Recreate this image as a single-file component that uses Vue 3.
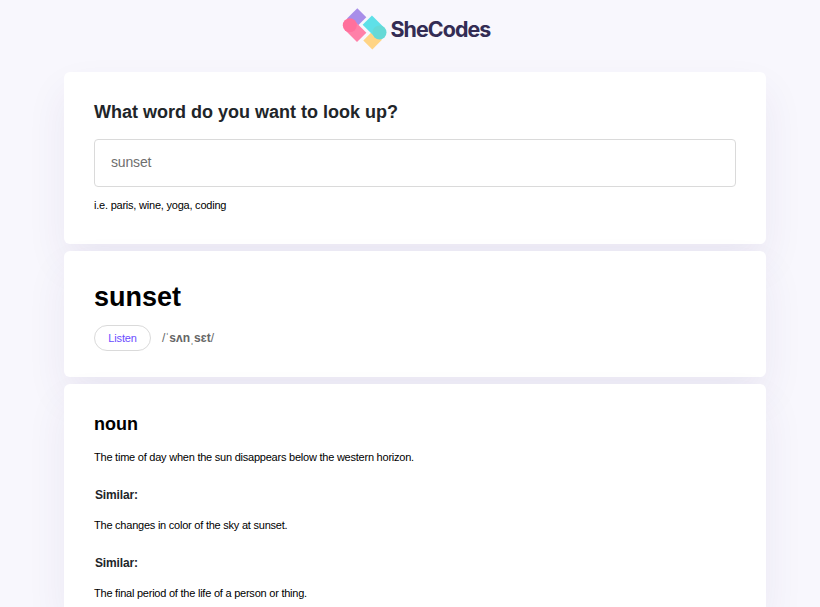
<script setup>
const meanings = [
  { text: 'The time of day when the sun disappears below the western horizon.', similar: true },
  { text: 'The changes in color of the sky at sunset.', similar: true },
  { text: 'The final period of the life of a person or thing.', similar: false },
]
</script>

<template>
  <main class="page">
    <header class="header">
      <svg class="logo" width="152" height="44" viewBox="0 0 152 44" role="img" aria-label="SheCodes">
        <path d="M15.3 0.3 L24.3 9.3 L14 19.6 L5 10.6 Z" fill="#a88ee9" />
        <path d="M30.3 41.4 L21.3 32.4 L31 22.7 L40 31.7 Z" fill="#ffd485" />
        <path d="M7.9 17.6 L19.7 29.4" stroke="#ff80a8" stroke-width="13.2" />
        <circle cx="7.8" cy="17.3" r="7" fill="#ff709c" />
        <path d="M25.3 12.1 L37.6 24.4" stroke="#5fe0e8" stroke-width="13.2" />
        <circle cx="37.5" cy="24.5" r="7" fill="#66d9d6" />
        <text x="48.4" y="29.2" textLength="100" lengthAdjust="spacingAndGlyphs">SheCodes</text>
      </svg>
    </header>

    <section class="card search">
      <h1>What word do you want to look up?</h1>
      <input type="search" placeholder="sunset" />
      <p class="hint">i.e. paris, wine, yoga, coding</p>
    </section>

    <section class="card result">
      <h2>sunset</h2>
      <div class="phonetic">
        <button type="button">Listen</button>
        <span>/ˈ<b>sʌn</b>ˌ<b>sɛt</b>/</span>
      </div>
    </section>

    <section class="card meaning">
      <h3>noun</h3>
      <div v-for="item in meanings" :key="item.text" class="definition">
        <p>{{ item.text }}</p>
        <h4 v-if="item.similar">Similar:</h4>
      </div>
    </section>
  </main>
</template>

<style>
body {
  background: #f8f7fd;
  overflow: hidden;
}
</style>

<style scoped>
.page {
  width: 702px;
  height: 607px;
  margin-left: 64px;
  font-family: "Liberation Sans", Arial, sans-serif;
  color: #000;
}
.header {
  height: 72px;
  padding: 8px 0 0 278px;
  box-sizing: border-box;
}
.logo {
  display: block;
  overflow: visible;
}
.logo text {
  font-family: Inter, sans-serif;
  font-size: 21px;
  font-weight: 700;
  letter-spacing: -0.9px;
  fill: #332c54;
}
.card {
  box-sizing: border-box;
  padding: 30px;
  margin-bottom: 7px;
  border-radius: 6px;
  background: #fff;
  box-shadow: 0 20px 40px rgba(65, 45, 125, 0.075);
}
h1, h2, h3, h4, p {
  margin: 0;
}
.search {
  height: 172px;
}
h1 {
  font-size: 18px;
  line-height: 20px;
  color: #212529;
}
input {
  display: block;
  box-sizing: border-box;
  width: 642px;
  height: 48px;
  margin-top: 17px;
  padding: 0 16px 2px;
  border: 1px solid #dadada;
  border-radius: 4px;
  outline: none;
  background: #fff;
  font-family: inherit;
  font-size: 14px;
  letter-spacing: -0.15px;
}
input::placeholder {
  color: #6f6f6f;
  opacity: 1;
}
.hint {
  margin-top: 11px;
  font-size: 11px;
  line-height: 14px;
  letter-spacing: -0.22px;
}
.result {
  height: 126px;
}
h2 {
  font-size: 27px;
  line-height: 32px;
}
.phonetic {
  display: flex;
  align-items: center;
  gap: 11px;
  margin-top: 12px;
  font-size: 12px;
  color: #666;
}
button {
  box-sizing: border-box;
  width: 57px;
  height: 26px;
  padding: 0;
  border: 1px solid #dadada;
  border-radius: 13px;
  background: #fff;
  font-family: inherit;
  font-size: 11px;
  letter-spacing: -0.15px;
  color: #6a4cff;
}
.meaning {
  height: 223px;
  margin-bottom: 0;
  padding-bottom: 0;
  border-radius: 6px 6px 0 0;
}
h3 {
  font-size: 18px;
  line-height: 20px;
}
.definition {
  height: 68px;
  font-size: 11px;
  line-height: 14px;
  letter-spacing: -0.23px;
}
.definition:last-child {
  height: 14px;
}
h3 + .definition {
  margin-top: 16px;
}
h4 {
  margin: 23px 0 0 1px;
  font-size: 12px;
  line-height: 16px;
  letter-spacing: -0.15px;
  color: #212529;
}
</style>
